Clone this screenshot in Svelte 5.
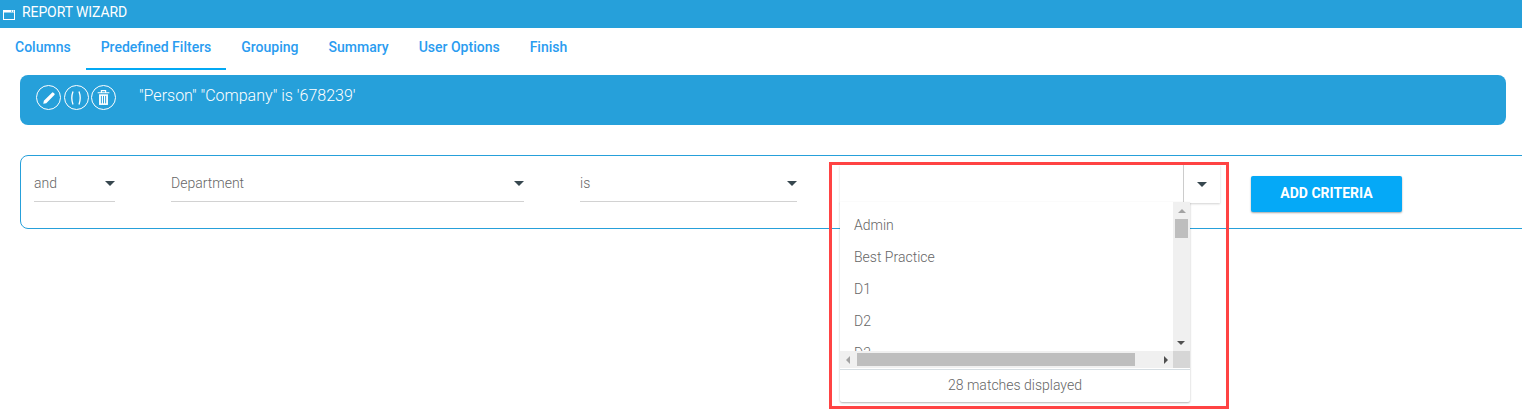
<script>
	const tabs = ['Columns', 'Predefined Filters', 'Grouping', 'Summary', 'User Options', 'Finish'];
	const active = 'Predefined Filters';
	const options = ['Admin', 'Best Practice', 'D1', 'D2', 'D3'];
</script>

<div class="page">
	<header class="title-bar">
		<svg class="win-icon" width="12" height="11" viewBox="0 0 12 11">
			<rect x="0.5" y="1.5" width="11" height="9" fill="none" stroke="#fff" />
			<rect x="0.5" y="1" width="11" height="2.5" fill="#fff" />
			<rect x="8" y="1.6" width="1" height="1" fill="#26a0da" />
			<rect x="10" y="1.6" width="1" height="1" fill="#26a0da" />
		</svg>
		<span>REPORT WIZARD</span>
	</header>

	<nav class="tabs">
		{#each tabs as tab}
			<span class="tab" class:active={tab === active}>{tab}</span>
		{/each}
	</nav>

	<section class="rule-banner">
		<div class="rule-actions">
			<span class="circle">
				<svg width="16" height="16" viewBox="0 0 14 14">
					<path d="M2 12l.5-2.6L9.6 2.3a.9.9 0 0 1 1.3 0l.8.8a.9.9 0 0 1 0 1.3L4.6 11.5z" fill="#fff" />
				</svg>
			</span>
			<span class="circle">
				<svg width="16" height="16" viewBox="0 0 16 16">
					<path d="M5 1.5Q2.6 8 5 14.5M11 1.5Q13.4 8 11 14.5" fill="none" stroke="#fff" stroke-width="1.3" />
				</svg>
			</span>
			<span class="circle">
				<svg width="15" height="17" viewBox="0 0 14 16">
					<path d="M1.5 3.5h11M5 3.5V1.5h4v2" fill="none" stroke="#fff" stroke-width="1.1" />
					<path d="M2.8 5h8.4v10H2.8z" fill="#fff" />
					<path d="M5 6.5v7M7 6.5v7M9 6.5v7" stroke="#26a0da" stroke-width="0.9" />
				</svg>
			</span>
		</div>
		<span class="rule-text">"Person" "Company" is '678239'</span>
	</section>

	<section class="criteria">
		<div class="select sel-and"><span>and</span><i class="caret"></i></div>
		<div class="select sel-field"><span>Department</span><i class="caret"></i></div>
		<div class="select sel-op"><span>is</span><i class="caret"></i></div>

		<div class="combo">
			<div class="combo-input"></div>
			<div class="combo-btn"><i class="caret"></i></div>

			<div class="dropdown">
				<div class="list-area">
					<ul class="list">
						{#each options as opt}
							<li>{opt}</li>
						{/each}
					</ul>
					<div class="vscroll">
						<i class="arrow up"></i>
						<div class="vthumb"></div>
						<i class="arrow down"></i>
					</div>
				</div>
				<div class="hscroll">
					<div class="htrack">
						<i class="arrow left"></i>
						<div class="hthumb"></div>
						<i class="arrow right"></i>
					</div>
					<div class="corner"></div>
				</div>
				<div class="matches">28 matches displayed</div>
			</div>
		</div>

		<button class="add-btn">ADD CRITERIA</button>
	</section>

	<div class="highlight"></div>
</div>

<style>
	:global(body) {
		margin: 0;
		background: #fff;
	}

	.page {
		position: relative;
		width: 1522px;
		height: 409px;
		overflow: hidden;
		font-family: Roboto, 'Liberation Sans', sans-serif;
		background: #fff;
	}

	.title-bar {
		height: 28px;
		background: #26a0da;
		color: #fff;
		display: flex;
		align-items: center;
		padding: 0 0 4px 3px;
		box-sizing: border-box;
		gap: 7px;
		font-size: 14px;
		letter-spacing: -0.1px;
	}

	.win-icon {
		margin-top: 5px;
	}

	.tabs {
		height: 42px;
		display: flex;
	}

	.tab {
		padding: 11px 15px 0;
		font-size: 14px;
		font-weight: 500;
		color: #2a9cf0;
		box-sizing: border-box;
		height: 42px;
	}

	.tab.active {
		border-bottom: 2px solid #03a9f4;
	}

	.rule-banner {
		margin: 5px 16px 0 20px;
		height: 50px;
		background: #26a0da;
		border-radius: 8px;
		display: flex;
		align-items: flex-start;
		color: #fff;
	}

	.rule-actions {
		display: flex;
		gap: 2.5px;
		padding: 10px 0 0 16px;
	}

	.circle {
		width: 23px;
		height: 23px;
		border: 1px solid #fff;
		border-radius: 50%;
		display: flex;
		align-items: center;
		justify-content: center;
	}

	.rule-text {
		margin: 11px 0 0 23px;
		font-size: 16px;
		font-weight: 300;
	}

	.criteria {
		margin: 30px -30px 0 20px;
		height: 74px;
		border: 1px solid #26a0da;
		border-radius: 8px;
		box-sizing: border-box;
		display: flex;
		align-items: flex-start;
		padding: 9px 0 0 13px;
	}

	.select {
		height: 37px;
		border-bottom: 1px solid #d2d2d2;
		display: flex;
		align-items: center;
		justify-content: space-between;
		font-size: 14px;
		font-weight: 300;
		color: #666;
		box-sizing: border-box;
	}

	.sel-and {
		width: 81px;
		margin-right: 56px;
	}

	.sel-field {
		width: 353px;
		margin-right: 56px;
	}

	.sel-op {
		width: 217px;
		margin-right: 43px;
	}

	.caret {
		display: block;
		width: 0;
		height: 0;
		border-left: 5px solid transparent;
		border-right: 5px solid transparent;
		border-top: 5px solid #37474f;
	}

	.combo {
		position: relative;
		width: 380px;
		height: 38px;
		display: flex;
		box-shadow: 0 1px 2px rgba(0, 0, 0, 0.18);
	}

	.combo-input {
		flex: 1;
		border-right: 1px solid #ccc;
	}

	.combo-btn {
		width: 36px;
		display: flex;
		align-items: center;
		justify-content: center;
	}

	.dropdown {
		position: absolute;
		left: 0;
		top: 37px;
		width: 350px;
		height: 200px;
		background: #fff;
		border-radius: 0 0 2px 2px;
		box-shadow: 0 1px 2px rgba(0, 0, 0, 0.3);
		display: flex;
		flex-direction: column;
		z-index: 2;
	}

	.list-area {
		height: 149px;
		display: flex;
		overflow: hidden;
	}

	.list {
		flex: 1;
		margin: 0;
		padding: 7px 0 0;
		list-style: none;
		overflow: hidden;
	}

	.list li {
		height: 32px;
		line-height: 32px;
		padding-left: 14px;
		font-size: 14px;
		font-weight: 300;
		color: #666;
	}

	.vscroll {
		width: 17px;
		background: #f0f0f0;
		display: flex;
		flex-direction: column;
		align-items: center;
		position: relative;
		padding-top: 7px;
		box-sizing: border-box;
	}

	.vthumb {
		width: 13px;
		height: 19px;
		background: #bebebe;
		margin-top: 6px;
	}

	.arrow {
		display: block;
		width: 0;
		height: 0;
	}

	.arrow.up {
		border-left: 4px solid transparent;
		border-right: 4px solid transparent;
		border-bottom: 4px solid #a3a3a3;
	}

	.arrow.down {
		position: absolute;
		bottom: 6px;
		left: 4px;
		border-left: 4px solid transparent;
		border-right: 4px solid transparent;
		border-top: 4px solid #505050;
	}

	.hscroll {
		height: 17px;
		display: flex;
	}

	.htrack {
		flex: 1;
		background: #f0f0f0;
		display: flex;
		align-items: center;
		padding-left: 6px;
		box-sizing: border-box;
	}

	.hthumb {
		width: 278px;
		height: 13px;
		background: #bebebe;
		margin: 0 29px 0 7px;
	}

	.arrow.left {
		border-top: 4px solid transparent;
		border-bottom: 4px solid transparent;
		border-right: 4px solid #a3a3a3;
	}

	.arrow.right {
		border-top: 4px solid transparent;
		border-bottom: 4px solid transparent;
		border-left: 4px solid #505050;
	}

	.corner {
		width: 17px;
		background: #d6d6d6;
	}

	.matches {
		flex: 1;
		border-top: 1px solid #d5dde2;
		margin-top: 1px;
		text-align: center;
		font-size: 14px;
		font-weight: 300;
		color: #666;
		line-height: 31px;
	}

	.add-btn {
		margin: 11px 0 0 31px;
		width: 151px;
		height: 36px;
		border: 0;
		border-radius: 2px;
		background: #05a9f7;
		color: #fff;
		font-family: inherit;
		font-size: 14px;
		font-weight: 700;
		box-shadow: 0 1px 2px rgba(0, 0, 0, 0.35);
		padding: 0 0 2px;
	}

	.highlight {
		position: absolute;
		left: 829px;
		top: 162px;
		width: 400px;
		height: 247px;
		box-sizing: border-box;
		border: 3px solid #ff4343;
		z-index: 3;
		pointer-events: none;
	}
</style>
